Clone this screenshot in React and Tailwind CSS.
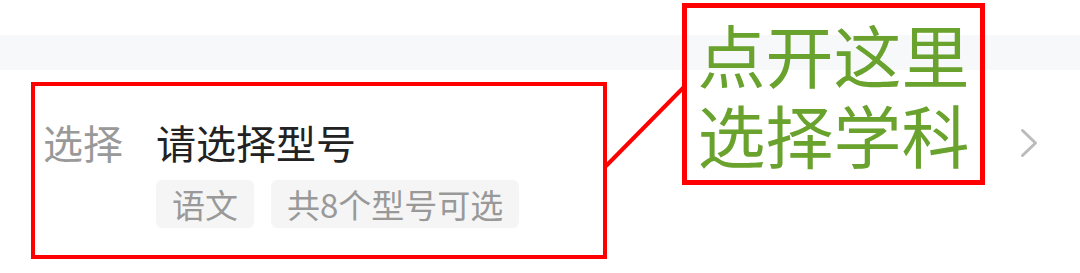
export default function App() {
  const cjk = { fontFamily: '"Noto Sans CJK SC", "Noto Sans", sans-serif' };
  return (
    <div className="relative w-[1080px] h-[273px] bg-white overflow-hidden" style={cjk}>
      <div className="h-[35px]" />
      <div className="h-[35px] bg-[#f7f8fa]" />
      <div className="flex items-start pl-[43px] pr-[41px] pt-[52px]">
        <div className="w-[113px] shrink-0 text-[40px] leading-[40px] text-[#999999]">选择</div>
        <div className="flex flex-1 flex-col gap-[18px]">
          <div className="text-[40px] leading-[40px] text-[#222222]">请选择型号</div>
          <div className="flex gap-[17px]">
            <span className="h-[48px] px-[16px] rounded-[6px] bg-[#f5f5f5] text-[33px] leading-[48px] text-[#999999]">语文</span>
            <span className="h-[48px] px-[16px] rounded-[6px] bg-[#f5f5f5] text-[33px] leading-[48px] text-[#999999]">共8个型号可选</span>
          </div>
        </div>
        <svg className="mt-[5px] shrink-0" width="20" height="32" viewBox="0 0 20 32" fill="none">
          <path d="M3.5 3.5 L16.5 16 L3.5 28.5" stroke="#bbbbbb" strokeWidth="3" strokeLinecap="round" strokeLinejoin="round" />
        </svg>
      </div>

      {/* annotations */}
      <div className="absolute left-[31px] top-[82px] w-[576px] h-[177px] border-4 border-[#ff0000]" />
      <svg className="absolute left-0 top-0" width="1080" height="273" viewBox="0 0 1080 273">
        <line x1="605" y1="167" x2="684" y2="87" stroke="#ff0000" strokeWidth="4" />
      </svg>
      <div className="absolute left-[682px] top-[3px] w-[303px] h-[182px] border-[5px] border-[#ff0000] flex flex-col items-center justify-center gap-[10px]">
        <div className="text-[68px] leading-[70px] font-normal text-[#69a22d]">点开这里</div>
        <div className="text-[68px] leading-[70px] font-normal text-[#69a22d]">选择学科</div>
      </div>
    </div>
  );
}
